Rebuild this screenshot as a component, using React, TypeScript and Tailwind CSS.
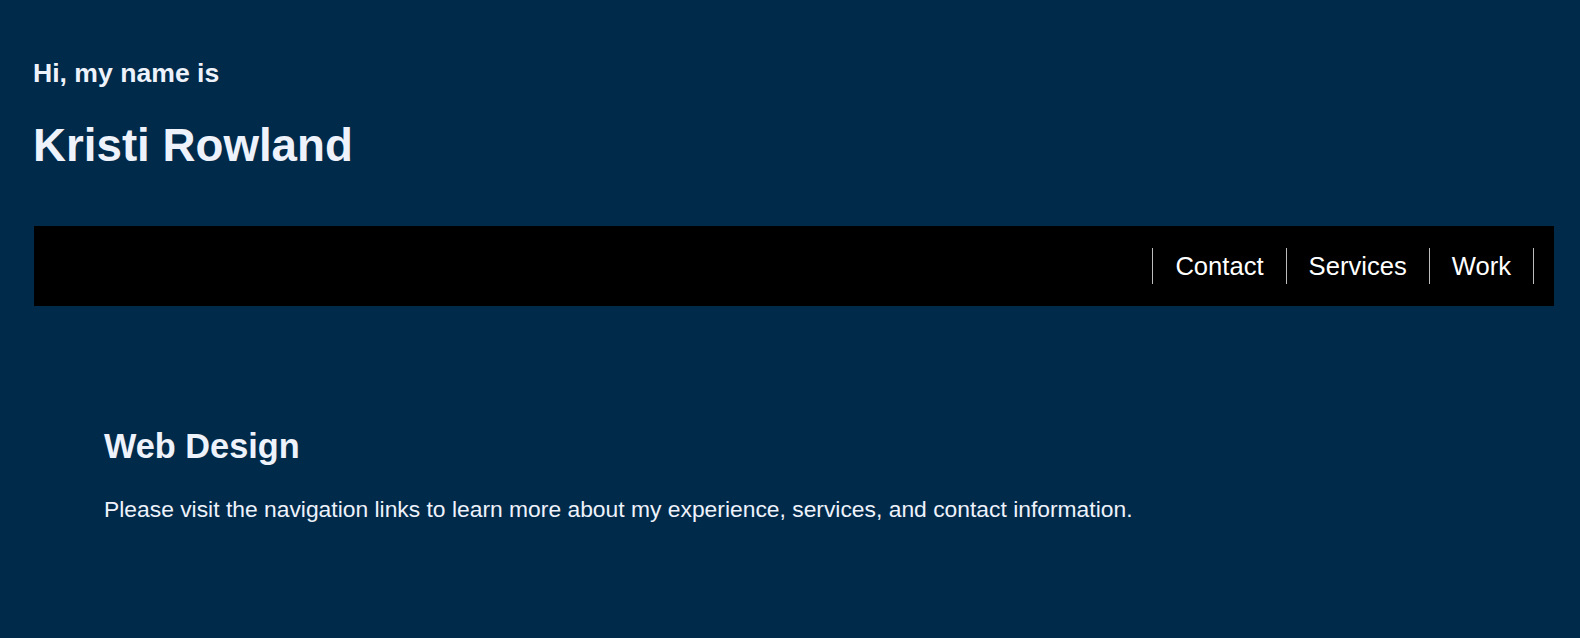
export default function App() {
  const links = ['Contact', 'Services', 'Work'];

  return (
    <div className="min-h-screen bg-[#002a4a] text-[#eef2fb] font-['Liberation_Sans',Arial,sans-serif] pt-[58px] pb-20">
      {/* Header */}
      <header className="pl-[33px]">
        <p className="text-[26.6px] leading-[30px] font-bold">Hi, my name is</p>
        <h1 className="mt-[32px] text-[45.7px] leading-[52px] font-bold">Kristi Rowland</h1>
      </header>

      {/* Nav bar */}
      <nav className="mt-[54px] ml-[34px] mr-[26px] h-[80px] bg-black flex items-center justify-end pr-[20px]">
        <ul className="flex border-r border-[#bdbdbd]">
          {links.map((link) => (
            <li key={link} className="border-l border-[#bdbdbd]">
              <a href="#" className="block px-[22px] text-[25.6px] leading-[36px] text-white">
                {link}
              </a>
            </li>
          ))}
        </ul>
      </nav>

      {/* Main section */}
      <main className="pl-[104px] mt-[120px]">
        <h2 className="text-[34.3px] leading-[40px] font-bold">Web Design</h2>
        <p className="mt-[30px] text-[22.85px] leading-[26px]">
          Please visit the navigation links to learn more about my experience, services, and contact information.
        </p>
      </main>
    </div>
  );
}
